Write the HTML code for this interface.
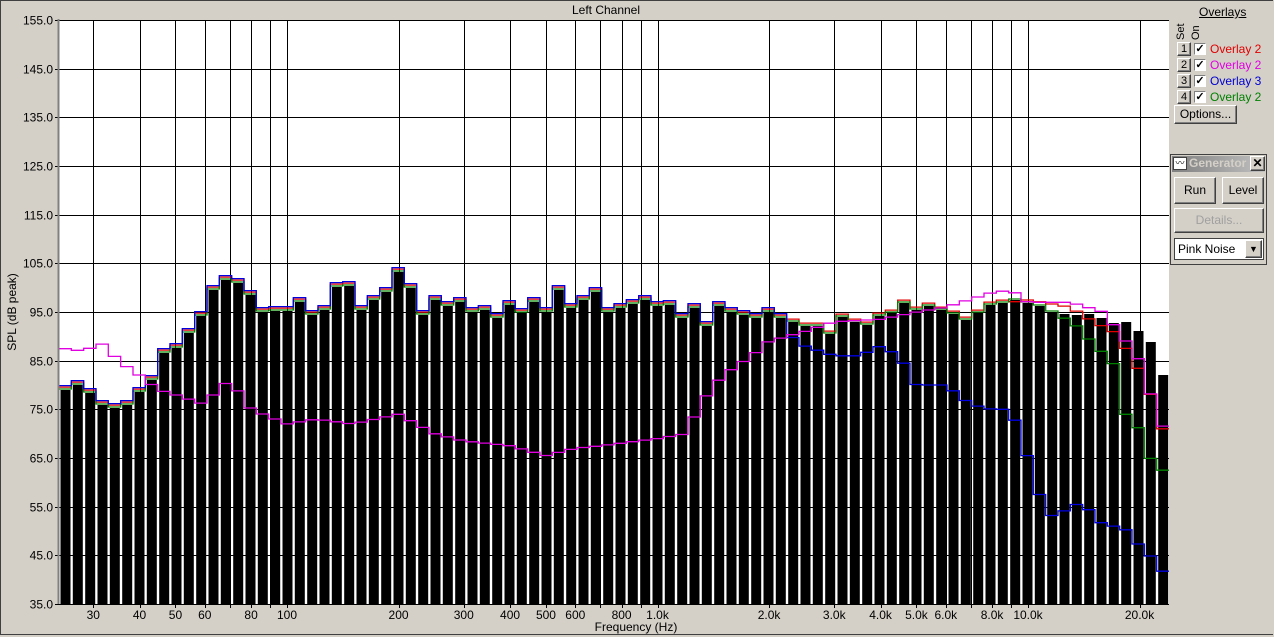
<!DOCTYPE html>
<html><head><meta charset="utf-8"><style>
body{margin:0;width:1274px;height:637px;background:#d4d0c8;overflow:hidden;font-family:"Liberation Sans",Arial,sans-serif;position:relative}
.frame{position:absolute;left:0;top:0;width:1272px;height:633px;border-top:1px solid #404040;border-left:1px solid #404040;border-bottom:1px solid #404040}
svg{position:absolute;left:0;top:0}
.btn{position:absolute;background:#d4d0c8;border:1px solid;border-color:#fff #404040 #404040 #fff;box-shadow:inset -1px -1px 0 #808080;font-size:12px;text-align:center;box-sizing:border-box}
.cb{position:absolute;width:12px;height:12px;background:#fff;border:1px solid;border-color:#808080 #fff #fff #808080;box-sizing:border-box;font-size:11px;line-height:10px;text-align:center;font-weight:bold}
.ov{position:absolute;font-size:12px}
</style></head><body>
<div class="frame"></div>
<svg id="s" width="1274" height="637" xmlns="http://www.w3.org/2000/svg"></svg>
<div style="position:absolute;left:1199px;top:5px;font-size:12px;text-decoration:underline">Overlays</div>
<div style="position:absolute;left:1175px;top:27px;font-size:11px;transform:rotate(-90deg);transform-origin:left top;top:40px">Set</div>
<div style="position:absolute;left:1190px;top:40px;font-size:11px;transform:rotate(-90deg);transform-origin:left top">On</div>
<div class="btn" style="left:1177px;top:42px;width:14px;height:14px;font-size:11px;line-height:12px">1</div>
<div class="btn" style="left:1177px;top:58px;width:14px;height:14px;font-size:11px;line-height:12px">2</div>
<div class="btn" style="left:1177px;top:74px;width:14px;height:14px;font-size:11px;line-height:12px">3</div>
<div class="btn" style="left:1177px;top:90px;width:14px;height:14px;font-size:11px;line-height:12px">4</div>
<div class="cb" style="left:1194px;top:43px">✓</div>
<div class="cb" style="left:1194px;top:59px">✓</div>
<div class="cb" style="left:1194px;top:75px">✓</div>
<div class="cb" style="left:1194px;top:91px">✓</div>
<div class="ov" style="left:1210px;top:42px;color:#e00000">Overlay 2</div>
<div class="ov" style="left:1210px;top:58px;color:#e000e0">Overlay 2</div>
<div class="ov" style="left:1210px;top:74px;color:#0000d0">Overlay 3</div>
<div class="ov" style="left:1210px;top:90px;color:#008000">Overlay 2</div>
<div class="btn" style="left:1174px;top:105px;width:63px;height:19px;line-height:17px">Options...</div>
<div style="position:absolute;left:1170px;top:154px;width:97px;height:111px;border:1px solid #404040;box-sizing:border-box"></div>
<div style="position:absolute;left:1172px;top:156px;width:93px;height:16px;background:linear-gradient(90deg,#808080,#c0c0c0);"></div>
<div style="position:absolute;left:1173px;top:157px;width:14px;height:13px;background:#fff;border:1px solid #404040;box-sizing:border-box;font-size:9px;line-height:11px;text-align:center">〰</div>
<div style="position:absolute;left:1189px;top:156px;font-size:12px;font-weight:bold;color:#d4d0c8;width:60px;overflow:hidden;white-space:nowrap">Generator</div>
<div class="btn" style="left:1250px;top:156px;width:15px;height:15px;font-size:12px;line-height:13px;font-weight:bold">✕</div>
<div class="btn" style="left:1174px;top:177px;width:42px;height:27px;line-height:25px">Run</div>
<div class="btn" style="left:1222px;top:177px;width:42px;height:27px;line-height:25px">Level</div>
<div class="btn" style="left:1174px;top:208px;width:90px;height:25px;line-height:23px;color:#a0a0a0">Details...</div>
<div style="position:absolute;left:1174px;top:238px;width:90px;height:22px;background:#fff;border:1px solid #404040;box-sizing:border-box;font-size:12px;line-height:20px;padding-left:3px">Pink Noise</div>
<div class="btn" style="left:1245px;top:240px;width:17px;height:18px;font-size:9px;line-height:16px">▼</div>
<script>
const s=document.getElementById('s');let h='';
const L=59,R=1169,T=20,B=604;
const yOf=d=>T+(155-d)*(B-T)/120;
const xOf=f=>287+(Math.log10(f)-2)*370.5;
h+=`<rect x="${L}" y="${T}" width="${R-L}" height="${B-T}" fill="#fff"/>`;
h+=`<text x="606" y="14" font-size="12" text-anchor="middle">Left Channel</text>`;
let fl=[30,40,50,60,70,80,90,100,200,300,400,500,600,700,800,900,1000,2000,3000,4000,5000,6000,7000,8000,9000,10000,20000];
fl.forEach(f=>{let x=Math.round(xOf(f))+.5;h+=`<line x1="${x}" y1="${T}" x2="${x}" y2="${B}" stroke="#000"/><line x1="${x}" y1="${B}" x2="${x}" y2="${B+4}" stroke="#000"/>`});
for(let d=35;d<=155;d+=10){let y=Math.round(yOf(d))+.5;h+=`<line x1="${L-4}" y1="${y}" x2="${R}" y2="${y}" stroke="#000"/><text x="53" y="${y+4}" font-size="12" text-anchor="end">${d.toFixed(1)}</text>`;}
const by=[390,385,393,405,408,405,392,380,353,348,333,316,290,280,283,295,312,311,311,302,315,310,287,286,310,300,292,272,288,315,300,306,302,312,310,318,305,313,302,312,290,308,300,292,312,308,304,300,306,305,318,308,326,306,312,315,318,312,318,322,326,326,334,317,322,325,316,313,303,310,306,310,314,320,313,305,303,300,303,306,312,314,315,314,318,323,322,331,342,375];
const n=by.length,p=(R-L)/n;
const bdb=by.map(y=>155-(y-T)*120/(B-T));
const fc=i=>Math.pow(10,(L+p*(i+.5)-287)/370.5+2);
function interp(k,f){let lf=Math.log10(f);for(let j=0;j<k.length-1;j++){let a=Math.log10(k[j][0]),b=Math.log10(k[j+1][0]);if(lf>=a&&lf<=b)return k[j][1]+(k[j+1][1]-k[j][1])*(lf-a)/(b-a);}return lf<Math.log10(k[0][0])?k[0][1]:k[k.length-1][1];}
by.forEach((y,i)=>{let x=L+p*i+1.5;h+=`<rect x="${x.toFixed(1)}" y="${y}" width="${(p-2.3).toFixed(1)}" height="${B-y}" fill="#000"/>`});
function step(vals,col){let d='';vals.forEach((v,i)=>{let x0=L+p*i,x1=x0+p,y=yOf(v).toFixed(1);d+=(i?'L':'M')+x0.toFixed(1)+' '+y+'L'+x1.toFixed(1)+' '+y;});h+=`<path d="${d}" fill="none" stroke="${col}" stroke-width="1.3"/>`;}
const mag=[[25,87.5],[28,87],[32,88.5],[35,85],[40,82],[45,79],[50,78],[60,76],[65,79],[70,81],[75,78],[80,75],[100,72],[120,73],[150,72],[200,74],[250,70],[300,68.5],[400,67.5],[500,65.5],[600,67],[700,67.5],[1000,69],[1200,70],[1300,76],[1500,82],[1800,86],[2000,89],[2500,91],[3000,93],[4000,93.5],[5000,95],[6000,96],[8000,99],[9000,99.5],[10000,97],[13000,97],[16000,95],[18000,90],[20000,85],[23000,71],[24500,78]];
const blu=[[2200,91],[2500,88],[3000,86],[3500,86],[4000,88],[4500,86],[5000,80],[6000,80],[7000,76],[8000,75],[9000,75],[10000,65],[11000,55],[12000,52],[13000,56],[15000,54],[16000,51],[18000,51],[19000,49],[20000,47],[22000,44],[23500,41]];
const grn=[[12000,94],[13000,93.5],[15000,88.5],[17000,84.5],[18500,73],[20000,71],[22000,62.5],[24000,62.5]];
const red=[[9000,97],[10000,97.5],[13000,96],[15000,93],[17000,91],[19000,86],[21000,80],[23000,71],[24000,71]];
step(bdb.map((v,i)=>fc(i)<9000?v+0.6:interp(red,fc(i))),'#e00000');
step(bdb.map((v,i)=>fc(i)<12000?v+0.2:interp(grn,fc(i))),'#008000');
step(bdb.map((v,i)=>fc(i)<2200?v+0.9:interp(blu,fc(i))),'#0000e0');
step(bdb.map((v,i)=>interp(mag,fc(i))),'#e000e0');
h+=`<line x1="${L-.5}" y1="${T-1}" x2="${L-.5}" y2="${B}" stroke="#808080" stroke-width="2"/>`;
h+=`<line x1="${L-4}" y1="${B+.5}" x2="${R}" y2="${B+.5}" stroke="#000"/>`;
[[30,'30'],[40,'40'],[50,'50'],[60,'60'],[80,'80'],[100,'100'],[200,'200'],[300,'300'],[400,'400'],[500,'500'],[600,'600'],[800,'800'],[1000,'1.0k'],[2000,'2.0k'],[3000,'3.0k'],[4000,'4.0k'],[5000,'5.0k'],[6000,'6.0k'],[8000,'8.0k'],[10000,'10.0k'],[20000,'20.0k']].forEach(([f,t])=>{h+=`<text x="${xOf(f)}" y="619" font-size="12" text-anchor="middle">${t}</text>`});
h+=`<text x="636" y="631" font-size="12" text-anchor="middle">Frequency (Hz)</text>`;
h+=`<text transform="translate(16,312) rotate(-90)" font-size="12" text-anchor="middle">SPL (dB peak)</text>`;
s.innerHTML=h;
</script>
</body></html>
